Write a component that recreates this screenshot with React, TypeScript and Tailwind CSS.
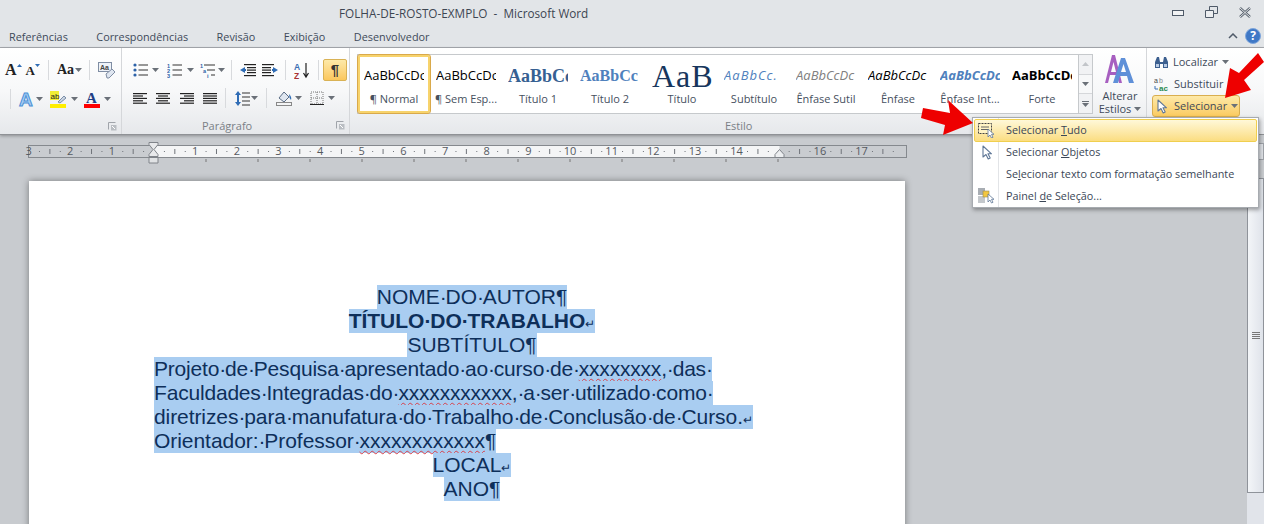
import React from "react";

const ui = "font-['Open_Sans',sans-serif] text-[11px] text-[#3e4a5a]";

function Caret({ className = "" }: { className?: string }) {
  return (
    <svg viewBox="0 0 7 4" className={"w-[7px] h-[4px] shrink-0 " + className}>
      <path d="M0 0h7L3.5 4z" fill="#6a7078" />
    </svg>
  );
}

function Sep({ className = "" }: { className?: string }) {
  return <div className={"w-px h-[20px] bg-[#d8dadd] shrink-0 " + className} />;
}

function Lines({ kind }: { kind: "l" | "c" | "r" | "j" }) {
  const rows = [0, 1, 2, 3, 4];
  const x = (i: number) => {
    const short = i % 2 === 1 ? 4 : 0;
    if (kind === "l") return [0, 14 - short];
    if (kind === "r") return [short, 14];
    if (kind === "c") return [short / 2, 14 - short / 2];
    return [0, 14];
  };
  return (
    <svg viewBox="0 0 14 11" className="w-[14px] h-[11px] shrink-0">
      {rows.map((i) => (
        <rect key={i} x={x(i)[0]} y={i * 2.4} width={x(i)[1] - x(i)[0]} height="1.2" fill="#222" />
      ))}
    </svg>
  );
}

function ListIcon({ kind }: { kind: "b" | "n" | "m" }) {
  const c = "#2d62a8";
  const tiny = { fontSize: 5.5, fontWeight: 700, fill: c, fontFamily: "Liberation Sans" };
  return (
    <svg viewBox="0 0 16 15" className="w-[16px] h-[15px] shrink-0">
      {kind === "m" ? (
        <>
          <text x="0" y="4.5" {...tiny}>1</text>
          <rect x="4" y="1.5" width="11" height="1" fill="#333" />
          <text x="3" y="9.5" {...tiny}>a</text>
          <rect x="7" y="6.5" width="8" height="1" fill="#333" />
          <text x="7" y="14.5" {...tiny}>i</text>
          <rect x="11" y="11.5" width="4" height="1" fill="#333" />
        </>
      ) : (
        [1, 6, 11].map((y, i) => (
          <g key={y}>
            {kind === "b" ? (
              <circle cx="2" cy={y + 1} r="1.6" fill={c} />
            ) : (
              <text x="0" y={y + 3.5} {...tiny}>{i + 1}</text>
            )}
            <rect x="5.5" y={y + 0.5} width="9.5" height="1" fill="#333" />
          </g>
        ))
      )}
    </svg>
  );
}

function Indent({ flip }: { flip?: boolean }) {
  return (
    <svg viewBox="0 0 16 14" className={"w-[16px] h-[14px] shrink-0 " + (flip ? "-scale-x-100" : "")}>
      <path d="M0 7l5-3v2h1v2H5v2z" fill="#2f6cb5" />
      <rect x="4" y="1" width="12" height="1.2" fill="#222" />
      <rect x="7" y="4" width="9" height="1.2" fill="#222" />
      <rect x="7" y="6.5" width="9" height="1.2" fill="#222" />
      <rect x="7" y="9" width="9" height="1.2" fill="#222" />
      <rect x="4" y="12" width="12" height="1.2" fill="#222" />
    </svg>
  );
}

function SmallExpander() {
  return (
    <svg viewBox="0 0 9 9" className="w-[9px] h-[9px] shrink-0">
      <path d="M.5.5h7M.5.5v7" stroke="#a0a4aa" fill="none" />
      <rect x="3" y="3" width="5.5" height="5.5" fill="#b9bdc2" />
      <path d="M4 4l3 3" stroke="#fff" />
    </svg>
  );
}

function Cursor({ className = "" }: { className?: string }) {
  return (
    <svg viewBox="0 0 10 15" className={"shrink-0 " + className}>
      <path d="M1 1v11l3-2.5L6.2 14l2-1-2.2-4.2h3.5z" fill="#fff" stroke="#5f7797" strokeWidth="1.1" strokeLinejoin="round" />
    </svg>
  );
}

const gallery = [
  { sample: "AaBbCcDc", cls: "font-['Open_Sans',sans-serif] text-[13px] text-black", label: "¶ Normal" },
  { sample: "AaBbCcDc", cls: "font-['Open_Sans',sans-serif] text-[13px] text-black", label: "¶ Sem Esp..." },
  { sample: "AaBbCc", cls: "font-['Liberation_Serif',serif] font-bold text-[18px] text-[#366092]", label: "Título 1" },
  { sample: "AaBbCc", cls: "font-['Liberation_Serif',serif] font-bold text-[16px] text-[#4f81bd]", label: "Título 2" },
  { sample: "AaB", cls: "font-['Liberation_Serif',serif] text-[32px] text-[#17365d] tracking-[1px]", label: "Título" },
  { sample: "AaBbCc.", cls: "font-['Open_Sans',sans-serif] italic text-[13px] text-[#4f81bd] tracking-[1px]", label: "Subtítulo" },
  { sample: "AaBbCcDc", cls: "font-['Open_Sans',sans-serif] italic text-[13px] text-[#808080]", label: "Ênfase Sutil" },
  { sample: "AaBbCcDc", cls: "font-['Open_Sans',sans-serif] italic text-[13px] text-black", label: "Ênfase" },
  { sample: "AaBbCcDc", cls: "font-['Open_Sans',sans-serif] italic font-bold text-[13px] text-[#4f81bd]", label: "Ênfase Int..." },
  { sample: "AaBbCcDc", cls: "font-['Open_Sans',sans-serif] font-bold text-[13px] text-black", label: "Forte" },
];

function Ruler() {
  const zero = 129.5;
  const cm = 41.65;
  const nums: { x: number; t: string }[] = [];
  for (let i = -3; i <= 17; i++) {
    if (i !== 0 && i !== 15) nums.push({ x: zero + i * cm, t: String(Math.abs(i)) });
  }
  const marks: number[] = [];
  for (let q = -11; q <= 71; q++) if (q % 4 !== 0) marks.push(q);
  const tabs: number[] = [];
  for (let t = 1; t <= 12; t++) tabs.push(zero + t * 52);
  return (
    <svg viewBox="0 0 888 26" className="w-[888px] h-[26px] block">
      <rect x="4.5" y="3.5" width="878" height="12" fill="#c9ccd0" stroke="#85898e" />
      <rect x={zero} y="4" width="626" height="11" fill="#f4f5f6" />
      {marks.map((q) => {
        const x = zero + (q * cm) / 4;
        return q % 2 === 0 ? (
          <rect key={q} x={x} y="7" width="1" height="5" fill="#70747a" />
        ) : (
          <rect key={q} x={x} y="9" width="1" height="1" fill="#70747a" />
        );
      })}
      {nums.map((n) => (
        <text key={n.t + n.x} x={n.x} y="13" textAnchor="middle" fontSize="11" fill="#55595f" fontFamily="Open Sans">
          {n.t}
        </text>
      ))}
      {tabs.map((x) => (
        <rect key={x} x={x} y="17" width="1" height="3" fill="#777" />
      ))}
      <path d="M125 0.5h9v2l-4 5 4 5v2h-9v-2l4-5-4-5z" fill="#e8e9eb" stroke="#80848a" />
      <path d="M125 15.5h9v5.5h-9z" fill="#e0e2e4" stroke="#80848a" />
      <path d="M751 15.5h9v-3l-4.5-5-4.5 5z" fill="#eceef0" stroke="#80848a" />
    </svg>
  );
}

function Text({ t }: { t: string }) {
  const parts = t.split(" ");
  return (
    <>
      {parts.map((p, i) => (
        <React.Fragment key={i}>
          {p.startsWith("xxx") ? (
            <span className="underline decoration-wavy decoration-[#d8404a] decoration-1 underline-offset-2">{p.replace(",", "")}</span>
          ) : (
            p
          )}
          {p.startsWith("xxx") && p.endsWith(",") ? "," : ""}
          {i < parts.length - 1 ? <span className="tracking-[-1.2px]">·</span> : null}
        </React.Fragment>
      ))}
    </>
  );
}

function Ret() {
  return <span className="text-[12px] align-baseline">↵</span>;
}

function Line({ children, center, className = "" }: { children: React.ReactNode; center?: boolean; className?: string }) {
  return (
    <div className={"h-[24px] leading-[23px] whitespace-nowrap flex " + (center ? "justify-center" : "")}>
      <span className={"bg-[#a9cdf1] h-[24px] block " + className}>{children}</span>
    </div>
  );
}

export default function App() {
  return (
    <div className={"relative w-[1264px] h-[524px] overflow-hidden bg-[#c8cbcf] flex flex-col " + ui}>
      {/* title bar */}
      <div className="h-[24px] shrink-0 bg-[#e2e5e8] flex items-center pt-[3px] pl-[339px] pr-[12px]">
        <span className="text-[11.75px] whitespace-pre text-[#3d4652]">FOLHA-DE-ROSTO-EXMPLO  -  Microsoft Word</span>
        <div className="ml-auto flex items-center gap-[21px] mt-[-3px]">
          <svg viewBox="0 0 12 6" className="w-[12px] h-[6px] mt-[2px]">
            <rect x="0.5" y="0.5" width="11" height="5" fill="#f2f3f4" stroke="#4f5a68" />
          </svg>
          <svg viewBox="0 0 13 12" className="w-[13px] h-[12px]">
            <path d="M4.5.5h8v7h-8z" fill="none" stroke="#4f5a68" />
            <path d="M.5 4.5h8v7h-8z" fill="#eceef0" stroke="#4f5a68" />
          </svg>
          <svg viewBox="0 0 12 11" className="w-[12px] h-[11px] mr-[1px]">
            <path d="M1 1l10 9M11 1L1 10" stroke="#59636f" strokeWidth="2.4" />
            <path d="M1 1l10 9M11 1L1 10" stroke="#f1f2f3" strokeWidth="0.9" />
          </svg>
        </div>
      </div>
      {/* tabs */}
      <div className="h-[24px] shrink-0 bg-[#e2e5e8] border-b border-[#a8abb0] flex items-center pt-[3px] pl-[9px] pr-[3px] gap-[28.5px] text-[10.85px]">
        <span>Referências</span>
        <span>Correspondências</span>
        <span>Revisão</span>
        <span>Exibição</span>
        <span>Desenvolvedor</span>
        <div className="ml-auto flex items-center gap-[7px] mt-[-3px]">
          <svg viewBox="0 0 10 6" className="w-[10px] h-[6px]">
            <path d="M1 5l4-4 4 4" fill="none" stroke="#4f5a68" strokeWidth="1.5" />
          </svg>
          <div className="w-[16px] h-[16px] rounded-full bg-[#3f78c6] border border-[#7ea6dc] text-white font-bold text-[12px] leading-[14px] text-center">?</div>
        </div>
      </div>
      {/* ribbon */}
      <div className="h-[87px] shrink-0 flex bg-gradient-to-b from-white via-[#f7f8f9] to-[#e6e8eb] border-b border-[#8f9296] shadow-[0_1px_3px_rgba(0,0,0,0.3)]">
        {/* Fonte (cut off) */}
        <div className="w-[122px] shrink-0 border-r border-[#d5d7da] flex flex-col">
          <div className="h-[70px] flex flex-col pt-[13px] gap-[11px]">
            <div className="flex items-center h-[18px] pl-[5px]">
              <span className="font-['Liberation_Serif',serif] font-bold text-[16px] text-[#222] leading-none">A</span>
              <svg viewBox="0 0 5 3" className="w-[5px] h-[3px] mb-[10px]"><path d="M0 3l2.5-3L5 3z" fill="#2f6cb5" /></svg>
              <span className="font-['Liberation_Serif',serif] font-bold text-[13px] text-[#222] leading-none ml-[4px]">A</span>
              <svg viewBox="0 0 5 3" className="w-[5px] h-[3px] mb-[9px]"><path d="M0 0h5L2.5 3z" fill="#2f6cb5" /></svg>
              <Sep className="ml-[8px]" />
              <span className="font-['Liberation_Serif',serif] font-bold text-[14px] text-[#222] leading-none ml-[8px]">Aa</span>
              <Caret className="ml-[1px]" />
              <Sep className="ml-[7px]" />
              <svg viewBox="0 0 18 17" className="w-[18px] h-[17px] ml-[8px]">
                <rect x="0.5" y="0.5" width="13" height="9" fill="#eef2f8" stroke="#7f8da3" />
                <text x="2" y="8" fontSize="7" fontWeight="700" fill="#444" fontFamily="Liberation Sans">Aa</text>
                <path d="M8 12l6-5 3 3-6 6H9z" fill="#dfe6f0" stroke="#7f8da3" />
              </svg>
            </div>
            <div className="flex items-center h-[18px]">
              <Sep className="ml-[10px]" />
              <span className="ml-[8px] font-['Liberation_Sans',sans-serif] font-bold text-[19px] leading-none text-[#a8d0f4] [-webkit-text-stroke:1px_#4b8fd6]">A</span>
              <Caret className="ml-[3px]" />
              <svg viewBox="0 0 16 17" className="w-[16px] h-[17px] ml-[7px]">
                <rect x="0" y="0" width="9" height="9" fill="#f1ef35" />
                <text x="0.5" y="8" fontSize="8" fill="#222" fontFamily="Liberation Sans">ab</text>
                <path d="M8 11l6-6 2 2-6 5z" fill="#cbd5e2" stroke="#5f7797" strokeWidth="0.8" />
                <rect x="0" y="13" width="16" height="4" fill="#ffee00" />
              </svg>
              <Caret className="ml-[5px]" />
              <svg viewBox="0 0 16 18" className="w-[16px] h-[18px] ml-[6px]">
                <text x="2" y="13" fontSize="15" fontWeight="700" fill="#1f3f85" fontFamily="Liberation Serif">A</text>
                <rect x="0" y="14" width="16" height="4" fill="#f00" />
              </svg>
              <Caret className="ml-[4px]" />
            </div>
          </div>
          <div className="flex-1 flex items-center justify-end pr-[4px]">
            <SmallExpander />
          </div>
        </div>
        {/* Paragrafo */}
        <div className="w-[228px] shrink-0 border-r border-[#d5d7da] flex flex-col">
          <div className="h-[70px] pt-[11px]">
            <div className="flex items-center h-[22px] pl-[11px]">
              <ListIcon kind="b" />
              <Caret className="ml-[3px]" />
              <div className="ml-[8px]"><ListIcon kind="n" /></div>
              <Caret className="ml-[4px]" />
              <div className="ml-[6px]"><ListIcon kind="m" /></div>
              <Caret className="ml-[2px]" />
              <Sep className="ml-[6px]" />
              <div className="ml-[8px]"><Indent /></div>
              <div className="ml-[6px]"><Indent flip /></div>
              <Sep className="ml-[7px]" />
              <svg viewBox="0 0 16 17" className="w-[16px] h-[17px] ml-[8px]">
                <text x="0" y="7.5" fontSize="8.5" fontWeight="700" fill="#3a6fb3" fontFamily="Liberation Sans">A</text>
                <text x="0" y="16.5" fontSize="8.5" fontWeight="700" fill="#a33" fontFamily="Liberation Sans">Z</text>
                <path d="M12 1v13M9.5 11l2.5 4 2.5-4" stroke="#222" strokeWidth="1.2" fill="none" />
              </svg>
              <Sep className="ml-[8px]" />
              <div className="ml-[4px] w-[24px] h-[22px] rounded-[2px] border border-[#d9b255] bg-gradient-to-b from-[#fde9a8] to-[#fbc75c] text-center text-[15px] leading-[19px] font-bold text-[#333] font-['Liberation_Sans',sans-serif]">¶</div>
            </div>
            <div className="flex items-center h-[18px] mt-[8px] pl-[11px]">
              <Lines kind="l" />
              <div className="ml-[9px]"><Lines kind="c" /></div>
              <div className="ml-[10px]"><Lines kind="r" /></div>
              <div className="ml-[9px]"><Lines kind="j" /></div>
              <Sep className="ml-[8px]" />
              <svg viewBox="0 0 15 15" className="w-[15px] h-[15px] ml-[9px]">
                <path d="M3 0l3 4H4v7h2l-3 4-3-4h2V4H0z" fill="#2f6cb5" />
                <path d="M7 2h8M7 6h8M7 10h8M7 14h8" stroke="#333" />
              </svg>
              <Caret className="ml-[1px]" />
              <Sep className="ml-[8px]" />
              <svg viewBox="0 0 17 16" className="w-[17px] h-[16px] ml-[9px]">
                <path d="M3 8l5-6 5 5-5 5z" fill="#dfe6f0" stroke="#5b6d85" />
                <path d="M13 4q3 3 2 6-2-2-2-6" fill="#2f6cb5" />
                <rect x="0.5" y="12.5" width="15" height="3" fill="#f3f4f5" stroke="#888" />
              </svg>
              <Caret className="ml-[2px]" />
              <svg viewBox="0 0 14 14" className="w-[14px] h-[14px] ml-[8px]">
                <path d="M1 1h12v12H1zM7 1v12M1 7h12" fill="none" stroke="#777" strokeDasharray="1 1" />
                <path d="M0 13.5h14" stroke="#222" />
              </svg>
              <Caret className="ml-[4px]" />
            </div>
          </div>
          <div className="flex-1 flex items-center pl-[80px] pr-[4px] text-[#7a7f86]">
            <span>Parágrafo</span>
            <div className="ml-auto"><SmallExpander /></div>
          </div>
        </div>
        {/* Estilo */}
        <div className="w-[797px] shrink-0 border-r border-[#d5d7da] flex flex-col">
          <div className="h-[70px] pt-[6px] pl-[7px] flex items-start">
            <div className="w-[722px] h-[60px] border border-[#c6c9cc] bg-white flex items-stretch">
              {gallery.map((g, i) => (
                <div
                  key={i}
                  className={
                    "w-[72px] shrink-0 flex flex-col items-center rounded-[2px] " +
                    (i === 0 ? "border-2 border-[#f7d36c] outline outline-1 outline-[#d9a94b] bg-white" : "border-2 border-transparent")
                  }
                >
                  <div className="h-[34px] w-[60px] pt-[3px] overflow-hidden flex items-center whitespace-nowrap">
                    <span className={"leading-none " + g.cls}>{g.sample}</span>
                  </div>
                  <div className="text-[#46505e] whitespace-nowrap">{g.label}</div>
                </div>
              ))}
            </div>
            <div className="w-[14px] h-[60px] border border-l-0 border-[#c6c9cc] flex flex-col">
              <div className="flex-1 flex items-center justify-center border-b border-[#d5d7da] bg-[#f1f2f4]"><svg viewBox="0 0 7 4" className="w-[7px] h-[4px]"><path d="M0 4h7L3.5 0z" fill="#c2c5c9" /></svg></div>
              <div className="flex-1 flex items-center justify-center border-b border-[#d5d7da] bg-[#f7f8f9]"><Caret /></div>
              <div className="flex-1 flex flex-col items-center justify-center bg-[#f1f2f4]"><div className="w-[7px] h-px bg-[#6a7078] mb-[1px]" /><Caret /></div>
            </div>
            <div className="ml-[3px] w-[48px] flex flex-col items-center text-center leading-[13px] mt-[-2px]">
              <svg viewBox="0 0 36 32" className="w-[36px] h-[32px]">
                <path d="M3 31L10 3h3l7 28h-3l-2-8H8l-2 8zM9 20h5l-2.5-10z" fill="#a75fc0" fillRule="evenodd" />
                <path d="M11 31L19 6h4l9 25h-5l-2-7h-7l-2 7zM19 20h5l-2.5-8z" fill="#5f90d8" fillRule="evenodd" />
              </svg>
              <span className="mt-[5px]">Alterar</span>
              <span className="flex items-center gap-[3px]">Estilos<Caret /></span>
            </div>
          </div>
          <div className="flex-1 flex items-center pl-[375px] text-[#7a7f86]">Estilo</div>
        </div>
        {/* Edição */}
        <div className="flex-1 flex flex-col pl-[5px] pt-[3px]">
          <div className="flex items-center h-[22px] pl-[2px]">
            <svg viewBox="0 0 15 13" className="w-[15px] h-[13px]">
              <path d="M1 12V6l2-5h2l1 5h3l1-5h2l2 5v6H9V8H6v4z" fill="#3c5f8f" />
              <rect x="2" y="8" width="3" height="3" fill="#b9cbe4" />
              <rect x="10" y="8" width="3" height="3" fill="#b9cbe4" />
            </svg>
            <span className="ml-[4px]">Localizar</span>
            <Caret className="ml-[4px]" />
          </div>
          <div className="flex items-center h-[22px] pl-[2px]">
            <svg viewBox="0 0 16 15" className="w-[16px] h-[15px]">
              <text x="0" y="6" fontSize="7" fill="#444" fontFamily="Liberation Sans">a</text>
              <text x="5" y="6" fontSize="7" fill="#888" fontFamily="Liberation Sans">b</text>
              <text x="5" y="14" fontSize="8" fontWeight="700" fill="#2a8a50" fontFamily="Liberation Sans">ac</text>
              <path d="M1 9v3h3" fill="none" stroke="#3a6fb3" />
            </svg>
            <span className="ml-[4px]">Substituir</span>
          </div>
          <div className="w-[88px] h-[22px] flex items-center rounded-[3px] border border-[#d9ae4f] bg-gradient-to-b from-[#fde9a8] to-[#fbcb5f] pl-[4px]">
            <Cursor className="w-[10px] h-[15px]" />
            <span className="ml-[7px]">Selecionar</span>
            <Caret className="ml-[4px]" />
          </div>
        </div>
      </div>
      {/* document area */}
      <div className="flex-1 flex min-h-0">
        <div className="w-[1247px] shrink-0 pt-[7px] pl-[24px] min-h-0">
          <Ruler />
          <div className="ml-[5px] mt-[13px] w-[876px] h-[400px] bg-white shadow-[0_0_7px_rgba(0,0,0,0.4)] pt-[104px] pl-[125px]">
            <div className="w-[636px] font-['Liberation_Sans',sans-serif] text-[21px] text-[#0e2f5a]">
              <Line center><Text t="NOME DO AUTOR" />¶</Line>
              <Line center><b><Text t="TÍTULO DO TRABALHO" /></b><Ret /></Line>
              <Line center><Text t="SUBTÍTULO" />¶</Line>
              <Line className="tracking-[-0.19px]"><Text t="Projeto de Pesquisa apresentado ao curso de xxxxxxxx, das " /></Line>
              <Line className="tracking-[-0.19px]"><Text t="Faculdades Integradas do xxxxxxxxxxx, a ser utilizado como " /></Line>
              <Line className="tracking-[-0.08px]"><Text t="diretrizes para manufatura do Trabalho de Conclusão de Curso." /><Ret /></Line>
              <Line className="tracking-[-0.05px]"><Text t="Orientador: Professor xxxxxxxxxxxx" />¶</Line>
              <Line center><Text t="LOCAL" /><Ret /></Line>
              <Line center><Text t="ANO" />¶</Line>
            </div>
          </div>
        </div>
        <div className="flex-1 bg-[#e1e4ea] flex flex-col items-stretch">
          <div className="h-[43px] shrink-0 bg-[#c8cbcf] pt-[8px]">
            <div className="h-[17px] border border-[#9ea2a8] bg-[#dfe2e7]" />
          </div>
          <div className="h-[315px] shrink-0 border border-[#8f939a] bg-gradient-to-r from-[#f3f5f8] to-[#dfe3ea] flex flex-col items-center justify-center gap-[1px]">
            <div className="w-[8px] h-px bg-[#777]" />
            <div className="w-[8px] h-px bg-[#777]" />
            <div className="w-[8px] h-px bg-[#777]" />
            <div className="w-[8px] h-px bg-[#777]" />
          </div>
        </div>
      </div>

      {/* dropdown menu */}
      <div className="absolute left-[972px] top-[117px] w-[287px] h-[91px] bg-white border border-[#a7abb0] shadow-[1px_2px_4px_rgba(0,0,0,0.35)] p-px flex flex-col text-[10.8px] text-[#3a4656]">
        <div className="absolute left-[25px] top-0 bottom-0 w-px bg-[#e2e4e7]" />
        <div className="relative h-[23px] shrink-0 flex items-center rounded-[2px] border border-[#f0cf4f] bg-gradient-to-b from-[#fff8d8] to-[#fbdd80]">
          <svg viewBox="0 0 17 15" className="w-[17px] h-[15px] ml-[3px]">
            <path d="M.5.5h13v10H.5z" fill="#fff3c4" stroke="#444" strokeDasharray="2 1" />
            <path d="M3 4h8M3 6.5h8" stroke="#666" />
            <path d="M10 6v8l2-2 1.5 3 1.5-.7-1.5-3H16z" fill="#fff" stroke="#5f7797" strokeWidth="0.8" />
          </svg>
          <span className="ml-[11px]">Selecionar <span className="underline">T</span>udo</span>
        </div>
        <div className="relative h-[21px] shrink-0 flex items-center">
          <Cursor className="w-[10px] h-[15px] ml-[8px]" />
          <span className="ml-[14px]">Selecionar <span className="underline">O</span>bjetos</span>
        </div>
        <div className="relative h-[22px] shrink-0 flex items-center">
          <span className="ml-[32px]">Se<span className="underline">l</span>ecionar texto com formatação semelhante</span>
        </div>
        <div className="relative h-[22px] shrink-0 flex items-center">
          <svg viewBox="0 0 17 16" className="w-[17px] h-[16px] ml-[4px]">
            <rect x="0" y="0" width="7" height="7" fill="#a8adb3" />
            <rect x="0" y="8" width="7" height="7" fill="#c4c8cc" />
            <rect x="5" y="3" width="6" height="6" fill="#f2c640" stroke="#9a8a50" strokeWidth="0.6" />
            <path d="M10 6v8l2-2 1.5 3 1.5-.7-1.5-3H16z" fill="#fff" stroke="#5f7797" strokeWidth="0.8" />
          </svg>
          <span className="ml-[11px]">Painel <span className="underline">d</span>e Seleção...</span>
        </div>
      </div>

      {/* red annotation arrows */}
      <svg viewBox="0 0 1264 524" className="absolute inset-0 w-[1264px] h-[524px] pointer-events-none">
        <polygon points="1258,53 1264,62 1244,80 1251,90 1225,98 1230,68 1239,73" fill="#ee0000" />
        <polygon points="923,108 950,113 948,100 973,123 943,135 945,125 921,118" fill="#ee0000" />
      </svg>
    </div>
  );
}
